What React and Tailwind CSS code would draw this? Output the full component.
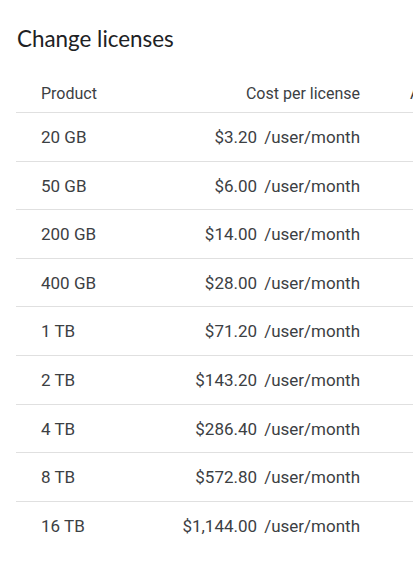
import React from "react";

const rows = [
  ["20 GB", "$3.20"],
  ["50 GB", "$6.00"],
  ["200 GB", "$14.00"],
  ["400 GB", "$28.00"],
  ["1 TB", "$71.20"],
  ["2 TB", "$143.20"],
  ["4 TB", "$286.40"],
  ["8 TB", "$572.80"],
  ["16 TB", "$1,144.00"],
];

export default function App() {
  return (
    <div className="w-[413px] h-[563px] overflow-hidden bg-white" style={{ fontFamily: "Roboto, Arial, sans-serif" }}>
      <div className="pl-[17px] pt-[25px] h-[76px]">
        <h1 className="text-[22.4px] leading-[28px] text-[#202124]" style={{ fontFamily: "Lato, Roboto, sans-serif" }}>
          Change licenses
        </h1>
      </div>
      <div className="ml-[16px] w-[500px]">
        <div className="flex items-center h-[37px] border-b border-[#e0e0e0] text-[16px] text-[#3c4043]">
          <div className="w-[154px] pl-[25px]">Product</div>
          <div className="w-[190px] text-right">Cost per license</div>
          <div className="pl-[50px]">Available</div>
        </div>
        {rows.map(([p, c], i) => (
          <div
            key={p}
            className={
              i === rows.length - 1
                ? "flex items-center pt-[2px] h-[48.6px] text-[17px] text-[#3c4043]"
                : "flex items-center pt-[2px] h-[48.6px] border-b border-[#e0e0e0] text-[17px] text-[#3c4043]"
            }
          >
            <div className="w-[154px] pl-[25px]">{p}</div>
            <div className="w-[190px] text-right whitespace-nowrap">
              {c}
              <span className="ml-[7px]">/user/month</span>
            </div>
          </div>
        ))}
      </div>
    </div>
  );
}
